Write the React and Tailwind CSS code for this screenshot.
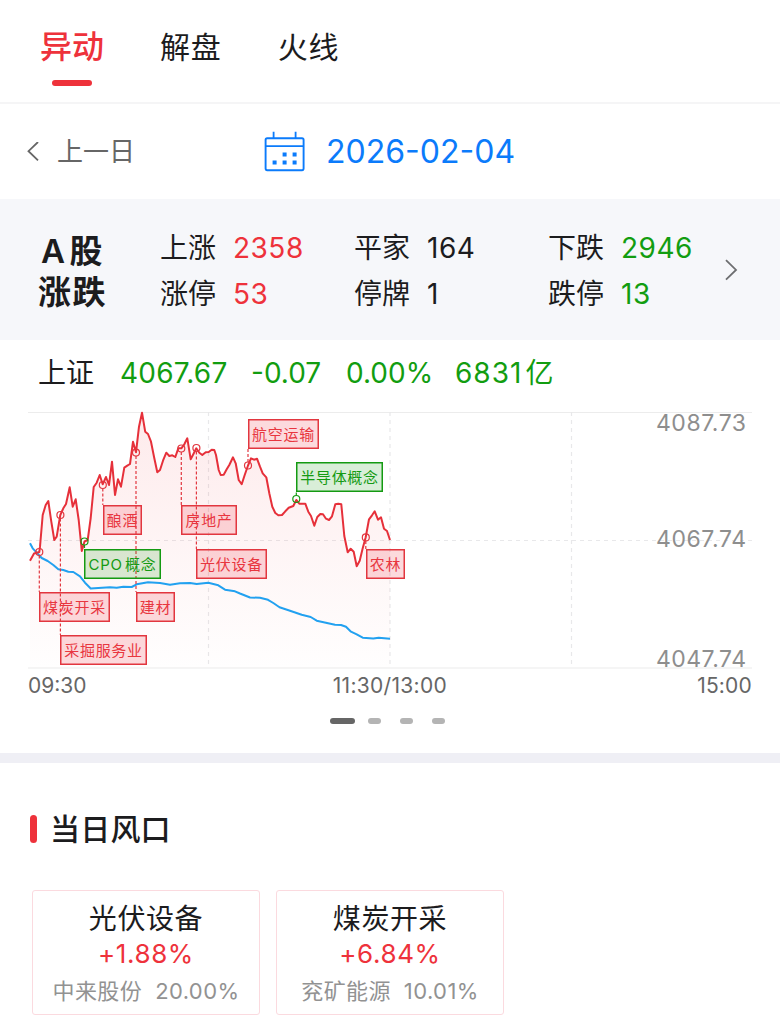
import React from 'react'

const tabs = [
  { label: '异动', active: true },
  { label: '解盘' },
  { label: '火线' }
]

const stats = [
  { label: '上涨', value: '2358', color: 'text-[#ee323b]' },
  { label: '平家', value: '164', color: 'text-[#1c1c1e]' },
  { label: '下跌', value: '2946', color: 'text-[#129d10]' },
  { label: '涨停', value: '53', color: 'text-[#ee323b]' },
  { label: '停牌', value: '1', color: 'text-[#1c1c1e]' },
  { label: '跌停', value: '13', color: 'text-[#129d10]' }
]

const hotSectors = [
  { name: '光伏设备', change: '+1.88%', stock: '中来股份', stockChange: '20.00%' },
  { name: '煤炭开采', change: '+6.84%', stock: '兖矿能源', stockChange: '10.01%' }
]

// Index price, one point per sample
const pricePoints =
  '30,560.7 34,553.5 39.3,552 40,546.7 42.7,515 45.7,505 48.3,501 51.3,521.7 54.3,540 56.7,536.7 60.3,515 63.3,508.3 66,504 69.7,487.3 72.7,506.7 75.7,499.3 78.7,520 81.8,551 84.5,541.5 87.7,540 90.7,518 93.7,487 96.7,482.7 99.7,475 102.7,484.3 106,477 109,485 112,461.7 115,495 118,479.3 121,486.7 124.3,467.7 127.3,465.7 130,464 133,441.7 136,452.3 139,426.7 142,412.7 145.2,431.7 148,434 151,441.7 154,456.7 157.3,472.3 160,470 163,460.7 166.3,452.7 169.3,456 172.3,455.3 175.3,457 178.3,448.3 181.3,448.3 184.3,444.3 187.3,438.3 190.7,459.3 193.3,454.3 196.3,448.3 199.3,452.7 202.3,455 205.7,452.3 208.7,452 211.7,449.7 214.3,450 216,455 218.7,470 220.7,475 223.7,474.7 226.7,469.3 229.3,465 233,457.3 235.7,463.3 238.7,480 241.7,484.3 244.7,475 248,465.5 251,458.3 254,459.7 257,458.7 260,466.7 262.7,473.3 266.3,477.3 269.3,493.3 272.3,506.7 275.3,513 278.3,515.3 282,515 285.3,511.3 288.7,507.7 293.3,506 296.3,500 299.3,503.7 305.3,503.7 308.3,511.7 311,516 314.3,525.7 317.3,517 320.3,514 323,514.3 326,518.7 329,520 332,516.3 335.3,504.3 338.3,503.7 341.3,504.3 344.3,536 347.7,552.3 350.7,548.7 353.7,551.7 356.7,566.3 359.7,560.7 362.7,548.3 365.7,537.3 369,519.3 372,515.3 374.7,511.3 378,519.7 381,517.3 384,528.7 387,531 390,540'

const averagePoints =
  '30,543.3 32.7,548.3 36.7,552.7 41.7,558 47.7,561 53.3,565 58.3,569.3 63.3,570 68.3,571.7 73.3,572 80,576.3 85,582.7 90.7,588.5 98.3,588 110,587.3 116.7,587.7 123.3,586.7 131.7,587 136.7,584.3 148,582.3 160,583 170,584.7 180,583.3 190,583 196.7,584 208.3,582.7 218.3,585.3 225,589.7 235,591.3 240,593.5 250,597.5 260,597.8 268,599.8 273.3,603 279.5,607.3 290,610.7 301.7,614.7 310.7,617 316.7,620.7 335,624.7 341,625 346,626.7 351,631.7 356.7,634.3 362.7,637.7 373.3,638.6 378.7,637.7 390,638.8'

// Sector tags: marker point plus the label's edge that the leader line meets
const markers = [
  { x: 39.3, y: 552, to: 592 },
  { x: 60.4, y: 515, to: 635 },
  { x: 84.5, y: 541.5, to: 549, down: true },
  { x: 102.8, y: 485, to: 505 },
  { x: 136, y: 452.6, to: 592 },
  { x: 181.3, y: 448.5, to: 505 },
  { x: 196.4, y: 448, to: 549 },
  { x: 248, y: 465.5, to: 448 },
  { x: 296.3, y: 499, to: 491, down: true },
  { x: 365.8, y: 537.4, to: 549 }
]

const redTag = 'shadow-[inset_0_0_0_1.5px_#e2363f] bg-[#ec3440]/18 text-[#e8363f]'
const greenTag = 'shadow-[inset_0_0_0_1.5px_#149a12] bg-[#2aa028]/18 text-[#149a12]'

const tags = [
  { label: '航空运输', pos: 'left-[248px] top-[15px] w-[71px]', tone: redTag },
  { label: '半导体概念', pos: 'left-[296px] top-[58px] w-[87px]', tone: greenTag },
  { label: '酿酒', pos: 'left-[103px] top-[101px] w-[39px]', tone: redTag },
  { label: '房地产', pos: 'left-[181px] top-[101px] w-[56px]', tone: redTag },
  { label: 'CPO 概念', pos: 'left-[84px] top-[145px] w-[77px]', tone: greenTag },
  { label: '光伏设备', pos: 'left-[196px] top-[145px] w-[71px]', tone: redTag },
  { label: '农林', pos: 'left-[366px] top-[145px] w-[39px]', tone: redTag },
  { label: '煤炭开采', pos: 'left-[39px] top-[188px] w-[71px]', tone: redTag },
  { label: '建材', pos: 'left-[136px] top-[188px] w-[39px]', tone: redTag },
  { label: '采掘服务业', pos: 'left-[60px] top-[231px] w-[87px]', tone: redTag }
]

function CalendarIcon() {
  return (
    <svg width="42" height="40" viewBox="0.4 0.8 42 40" fill="none" stroke="#0b7bfb" className="overflow-visible">
      <rect x="2" y="7" width="38" height="32" rx="1.6" strokeWidth="1.9" />
      <path d="M2 15h38M10 0.5V7M32 0.5V7" strokeWidth="1.8" />
      <path d="M19 23.2h4M29 23.2h4M9 31.2h4M19 31.2h4M29 31.2h4" strokeWidth="4" />
    </svg>
  )
}

function IndexChart() {
  return (
    <div className="relative h-[268px] w-[780px]">
      <svg width="780" height="268" viewBox="0 404 780 268" fill="none" className="block">
        <defs>
          <linearGradient id="fade" x1="0" y1="412" x2="0" y2="668" gradientUnits="userSpaceOnUse">
            <stop offset="0" stopColor="#ee323b" stopOpacity="0.1" />
            <stop offset="1" stopColor="#ee323b" stopOpacity="0.005" />
          </linearGradient>
        </defs>
        <path d="M28 412.5H752M28 668H752" stroke="#ececec" strokeWidth="1.2" />
        <path
          d="M28 540.5H752M208.5 412V668M390 412V668M571.5 412V668"
          stroke="#e8e8ea"
          strokeWidth="1.2"
          strokeDasharray="4 4"
        />
        <polygon points={`30,668 ${pricePoints} 390,668`} fill="url(#fade)" />
        <polyline points={averagePoints} stroke="#22a1f0" strokeWidth="2" strokeLinejoin="round" />
        <polyline points={pricePoints} stroke="#e6303a" strokeWidth="2" strokeLinejoin="round" />
        {markers.map(m => (
          <g key={m.x} stroke={m.down ? '#149a12' : '#e2363f'}>
            <path
              d={`M${m.x} ${m.y + (m.to > m.y ? 3.5 : -3.5)}V${m.to}`}
              strokeWidth="1.2"
              strokeDasharray="3 2"
            />
            <circle cx={m.x} cy={m.y} r="3.5" strokeWidth="1.2" />
          </g>
        ))}
        <g
          fill="#8e8e8e"
          fontFamily="Inter, sans-serif"
          fontSize="23"
          textAnchor="end"
        >
          <text x="746" y="431" textLength="90">4087.73</text>
          <text x="746" y="547" textLength="90">4067.74</text>
          <text x="746" y="667" textLength="90">4047.74</text>
        </g>
      </svg>
      {tags.map(tag => (
        <span
          key={tag.label}
          className={`absolute flex h-[30px] items-center justify-center pt-px text-[15px] leading-none tracking-[0.7px] [word-spacing:-2.5px] whitespace-nowrap ${tag.pos} ${tag.tone}`}
        >
          {tag.label}
        </span>
      ))}
    </div>
  )
}

export default function App() {
  return (
    <div className="h-[1024px] w-[780px] overflow-hidden bg-white font-['Inter','Noto_Sans_CJK_SC',sans-serif] text-[#1c1c1e]">
      {/* Tabs */}
      <nav className="flex h-[104px] gap-14 border-b-2 border-[#f5f5f6] pl-10">
        {tabs.map(tab => (
          <div key={tab.label} className="flex flex-col items-center pt-[25px]">
            <span
              className={
                tab.active
                  ? 'text-[32px] leading-[44px] font-medium text-[#ee323b]'
                  : 'text-[30px] leading-[44px] tracking-[0.8px]'
              }
            >
              {tab.label}
            </span>
            {tab.active && <span className="mt-[11px] h-1.5 w-10 rounded-full bg-[#ee323b]" />}
          </div>
        ))}
      </nav>

      {/* Date switcher */}
      <div className="flex h-[95px] items-center pl-[27px]">
        <div className="flex w-[237px] items-center text-[#666]">
          <svg width="12" height="20" viewBox="0 0.8 12 20" fill="none" stroke="#666" strokeWidth="1.8">
            <path d="M11 0.8L1.5 10l9.5 9.2" />
          </svg>
          <span className="pl-[18px] text-[26px] leading-[40px]">上一日</span>
        </div>
        <CalendarIcon />
        <span className="pl-5 text-[32px] leading-[40px] text-[#0b7bfb]">2026-02-04</span>
      </div>

      {/* Market breadth */}
      <section className="flex h-[141px] bg-[#f6f7fa] pl-[38px]">
        <div className="w-[121px] pt-8 text-[33px] leading-[41px] font-semibold tracking-[1.5px]">
          <div className="flex gap-[3px] pl-[3px]">
            <span>A</span>
            <span>股</span>
          </div>
          <div>涨跌</div>
        </div>
        <div className="grid h-[118px] grid-cols-[194px_194px_174px] grid-rows-[46px_46px] pt-[26px]">
          {stats.map(s => (
            <div key={s.label} className="flex items-center pl-px text-[28px] leading-[46px]">
              <span className="w-[73px]">{s.label}</span>
              <span className={`tracking-[0.5px] ${s.color}`}>{s.value}</span>
            </div>
          ))}
        </div>
        <svg width="14" height="22" viewBox="0 0 14 22" fill="none" stroke="#6d6e70" strokeWidth="1.8" className="mt-[60px] ml-[3px]">
          <path d="M2 1.2l10 9.7-10 9.7" />
        </svg>
      </section>

      {/* Index quote */}
      <div className="flex h-16 items-center pt-0.5 pl-[38px] text-[28px] leading-[40px] text-[#129d10]">
        <span className="w-[82px] text-[#1c1c1e]">上证</span>
        <span className="w-[131px] tracking-[0.2px]">4067.67</span>
        <span className="w-[95px]">-0.07</span>
        <span className="w-[109px]">0.00%</span>
        <span className="tracking-[1px]">6831</span>
        <span className="pl-[3px]">亿</span>
      </div>

      <IndexChart />

      <div className="flex h-[27px] justify-between pr-[28px] pl-7 text-[21px] leading-[27px] text-[#666]">
        <span>09:30</span>
        <span className="-ml-1 tracking-[0.3px]">11:30/13:00</span>
        <span className="tracking-[0.2px]">15:00</span>
      </div>

      {/* Pager */}
      <div className="flex h-[54px] items-start gap-[19px] pt-[19px] pl-[330px]">
        <span className="-mr-[6px] h-[6px] w-[25px] rounded-full bg-[#666]" />
        <span className="h-[6px] w-[13px] rounded-full bg-[#b4b4b4]" />
        <span className="h-[6px] w-[13px] rounded-full bg-[#b4b4b4]" />
        <span className="h-[6px] w-[13px] rounded-full bg-[#b4b4b4]" />
      </div>

      <div className="h-[10px] bg-[#efeff5]" />

      {/* Hot sectors */}
      <section>
        <h2 className="flex h-[127px] items-center pt-[5px] pl-[30px] text-[30px] font-medium">
          <span className="h-7 w-[7px] rounded-full bg-[#ee323b]" />
          <span className="pt-px pl-[13px] tracking-[0.2px]">当日风口</span>
        </h2>
        <div className="flex gap-4 pl-8">
          {hotSectors.map(s => (
            <div
              key={s.name}
              className="flex h-[125px] w-[228px] flex-col items-center rounded-[3px] border-[1.5px] border-[#fbdadf]"
            >
              <div className="mt-2 text-[28px] leading-[40px] tracking-[0.6px]">{s.name}</div>
              <div className="-mt-px text-[26px] leading-[31px] tracking-[0.6px] text-[#ee323b]">{s.change}</div>
              <div className="mt-[3px] flex gap-[13px] text-[22px] leading-[38px] tracking-[0.4px] text-[#929292]">
                <span>{s.stock}</span>
                <span>{s.stockChange}</span>
              </div>
            </div>
          ))}
        </div>
      </section>
    </div>
  )
}
